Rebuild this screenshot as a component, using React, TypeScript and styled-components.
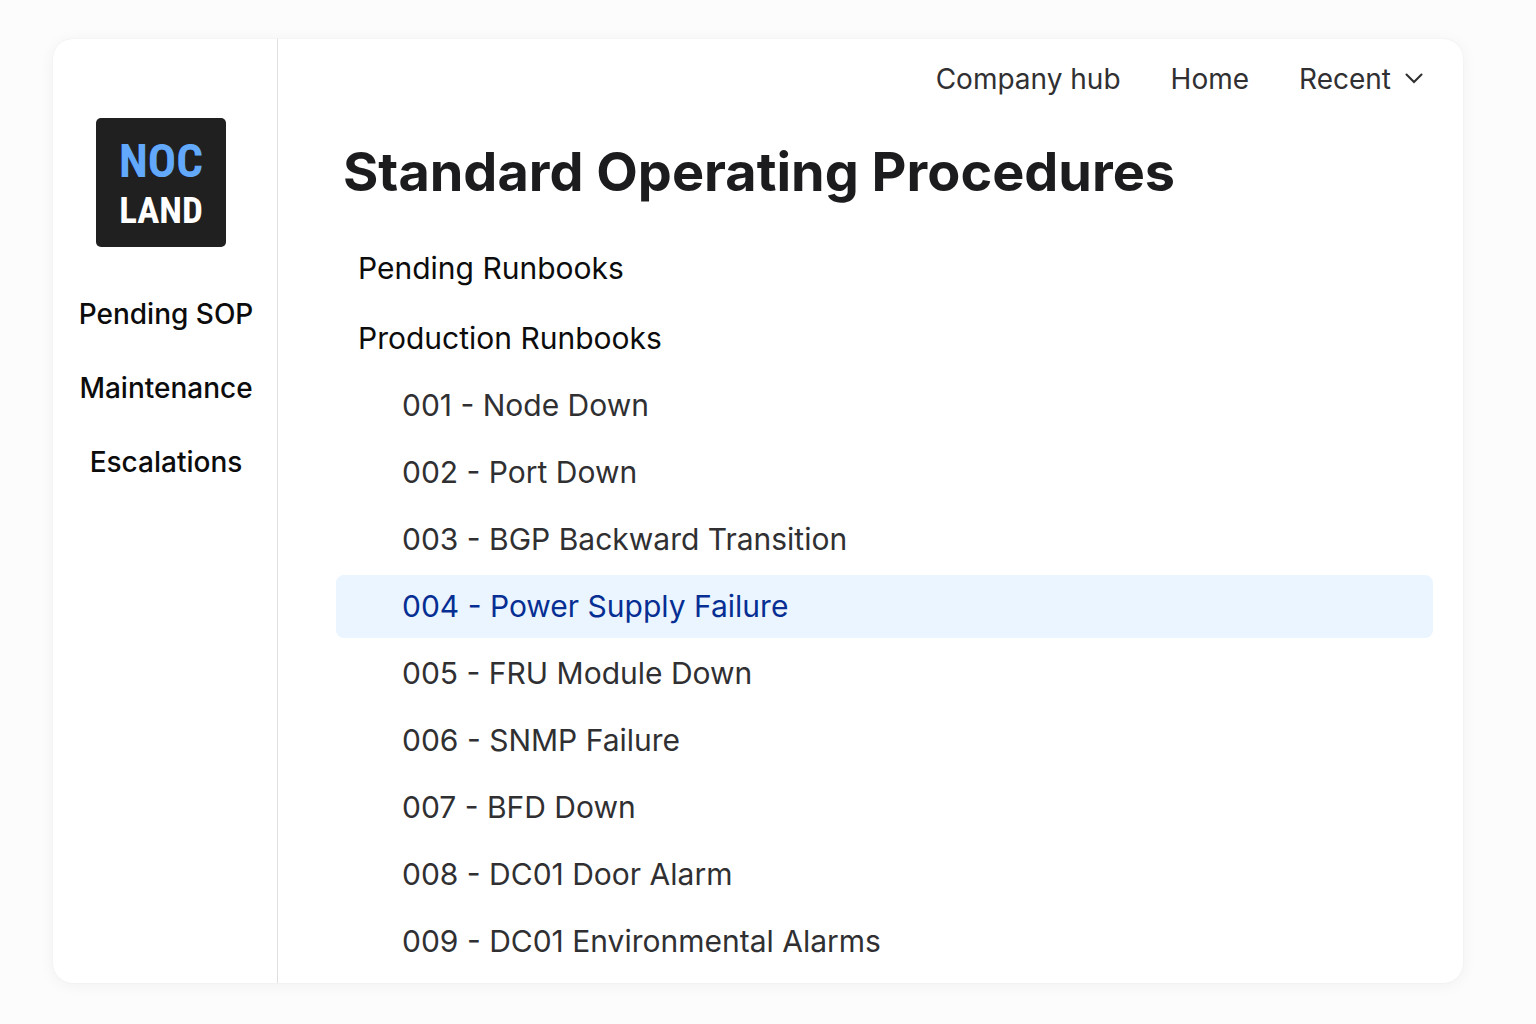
import React from "react";
import styled, { createGlobalStyle } from "styled-components";

const GlobalStyle = createGlobalStyle`
  *, *::before, *::after {
    box-sizing: border-box;
  }
  body {
    margin: 0;
    background: #fcfcfc;
    color: #1c1c1e;
    font-family: Inter, "Liberation Sans", sans-serif;
  }
  ul {
    list-style: none;
    margin: 0;
    padding: 0;
  }
  a {
    color: inherit;
    text-decoration: none;
  }
`;

const Page = styled.div`
  display: flex;
  min-height: 100vh;
  padding: 39px 73px 41px 53px;
`;

const Window = styled.div`
  display: flex;
  flex: 1;
  min-width: 0;
  background: #fff;
  border-radius: 20px;
  box-shadow: 0 2px 16px rgba(0, 0, 0, 0.05), 0 0 2px rgba(0, 0, 0, 0.05);
`;

const Sidebar = styled.aside`
  flex: 0 0 225px;
  display: flex;
  flex-direction: column;
  align-items: center;
  gap: 49px;
  padding: 79px 8px 24px 0;
  border-right: 1px solid #e0e0e0;
`;

const Logo = styled.a`
  display: flex;
  flex-direction: column;
  align-items: center;
  justify-content: center;
  width: 130px;
  height: 129px;
  border-radius: 5px;
  background: #202020;
  font-family: "Roboto Condensed", Roboto, sans-serif;
  font-weight: 700;
`;

const LogoTop = styled.span`
  color: #62a9fb;
  font-size: 47px;
  line-height: 56px;
`;

const LogoBottom = styled.span`
  color: #fff;
  font-size: 37px;
  line-height: 44px;
`;

const SideList = styled.ul`
  display: flex;
  flex-direction: column;
  align-items: center;
  gap: 38px;
  padding-left: 10px;
`;

const SideLink = styled.a`
  display: block;
  color: #0c0c0d;
  font-size: 28px;
  font-weight: 500;
  line-height: 36px;
  white-space: nowrap;
`;

const Main = styled.main`
  flex: 1;
  min-width: 0;
  padding: 20px 30px 9px 58px;
`;

const TopNav = styled.nav`
  display: flex;
  justify-content: flex-end;
  gap: 50px;
  padding-right: 9px;
  color: #303032;
  font-size: 28px;
  line-height: 40px;
`;

const MenuButton = styled.button`
  display: flex;
  align-items: center;
  gap: 13px;
  padding: 0;
  border: 0;
  background: none;
  color: inherit;
  font: inherit;
  cursor: pointer;
`;

const Title = styled.h1`
  margin: 40px 0 0 7px;
  color: #1c1c1e;
  font-size: 54px;
  font-weight: 700;
  line-height: 66px;
`;

const Section = styled.h2`
  margin: 0;
  padding: 15px 22px;
  color: #0c0c0d;
  font-size: 30px;
  font-weight: 400;
  line-height: 40px;
`;

const Sections = styled.div`
  padding-top: 28px;
`;

const Runbooks = styled.ul`
  display: flex;
  flex-direction: column;
  gap: 4px;
  padding-top: 1px;
`;

const RunbookLink = styled.a<{ $active: boolean }>`
  display: block;
  padding: 11px 66px 12px;
  border-radius: 8px;
  background: ${(p) => (p.$active ? "#eaf5ff" : "transparent")};
  color: ${(p) => (p.$active ? "#062e93" : "#303032")};
  font-size: 30px;
  line-height: 40px;
`;

const sideLinks = ["Pending SOP", "Maintenance", "Escalations"];

const runbooks = [
  "001 - Node Down",
  "002 - Port Down",
  "003 - BGP Backward Transition",
  "004 - Power Supply Failure",
  "005 - FRU Module Down",
  "006 - SNMP Failure",
  "007 - BFD Down",
  "008 - DC01 Door Alarm",
  "009 - DC01 Environmental Alarms",
];

const activeRunbook = "004 - Power Supply Failure";

function Chevron() {
  return (
    <svg width="20" height="12" viewBox="0 0 20 12" fill="none" aria-hidden="true">
      <path d="M2.5 1.5 10 9l7.5-7.5" stroke="currentColor" strokeWidth="2.1" strokeLinecap="round" strokeLinejoin="miter" />
    </svg>
  );
}

export default function App() {
  return (
    <>
      <GlobalStyle />
      <Page>
        <Window>
          <Sidebar>
            <Logo href="#">
              <LogoTop>NOC</LogoTop>
              <LogoBottom>LAND</LogoBottom>
            </Logo>
            <nav>
              <SideList>
                {sideLinks.map((label) => (
                  <li key={label}>
                    <SideLink href="#">{label}</SideLink>
                  </li>
                ))}
              </SideList>
            </nav>
          </Sidebar>
          <Main>
            <TopNav>
              <a href="#">Company hub</a>
              <a href="#">Home</a>
              <MenuButton type="button">
                Recent
                <Chevron />
              </MenuButton>
            </TopNav>
            <Title>Standard Operating Procedures</Title>
            <Sections>
              <Section>Pending Runbooks</Section>
              <Section>Production Runbooks</Section>
              <Runbooks>
                {runbooks.map((name) => (
                  <li key={name}>
                    <RunbookLink href="#" $active={name === activeRunbook}>
                      {name}
                    </RunbookLink>
                  </li>
                ))}
              </Runbooks>
            </Sections>
          </Main>
        </Window>
      </Page>
    </>
  );
}
